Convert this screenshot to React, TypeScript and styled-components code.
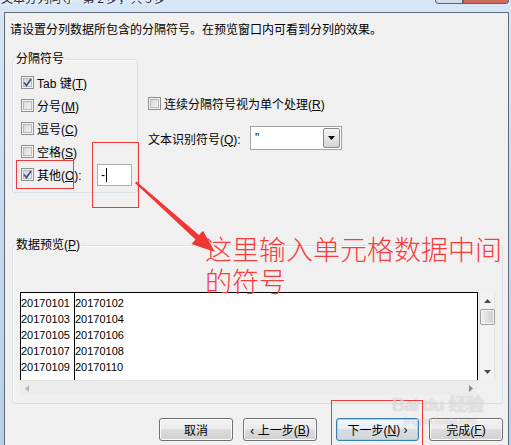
import React from 'react';
import styled, { createGlobalStyle } from 'styled-components';

const Global = createGlobalStyle`
  html, body { margin: 0; padding: 0; background: #b9d1ea; }
  body {
    font-family: "Liberation Sans", "Noto Sans CJK SC", sans-serif;
    font-size: 12px;
    color: #000;
  }
  * { box-sizing: border-box; }
`;

const CJK = `"Liberation Sans", "Noto Sans CJK SC", sans-serif`;

const Window = styled.div`
  position: relative;
  width: 511px;
  height: 445px;
  overflow: hidden;
  background: linear-gradient(180deg, #d6e6f6 0%, #b7cfe9 100%);
  display: flex;
  flex-direction: column;
`;

const TitleBar = styled.div`
  height: 12px;
  flex: none;
  display: flex;
  justify-content: space-between;
  align-items: flex-start;
  overflow: hidden;
`;

const TitleText = styled.div`
  margin-top: -10px;
  margin-left: 1px;
  font-family: "Noto Sans CJK SC", sans-serif;
  font-size: 12px;
  line-height: 16px;
  color: #1c2838;
  text-shadow: 0 0 5px #fff, 0 0 3px #fff;
  white-space: nowrap;
`;

const CaptionButtons = styled.div`
  display: flex;
  margin-right: 2px;
`;

const CaptionButton = styled.div<{ $close?: boolean; $w: number }>`
  width: ${(p) => p.$w}px;
  height: 4px;
  border: 1px solid #56667a;
  border-top: none;
  border-radius: ${(p) => (p.$close ? '0 0 4px 0' : '0 0 0 4px')};
  background: ${(p) => (p.$close ? '#cf6a5a' : '#d3dde8')};
`;

const Frame = styled.div`
  flex: 1;
  display: flex;
  padding: 0 2px 0 4px;
  min-height: 0;
`;

const Content = styled.div`
  flex: 1;
  background: #f0f0f0;
  border: 1px solid #5b6b7c;
  border-bottom: none;
  display: flex;
  flex-direction: column;
`;

const Instruction = styled.div`
  margin: 9px 0 0 5px;
  line-height: 16px;
  font-family: ${CJK};
  white-space: nowrap;
`;

const TopSection = styled.div`
  display: flex;
  align-items: flex-start;
  margin-top: 14px;
`;

const GroupBox = styled.fieldset<{ $w: number; $pt: number; $pb: number }>`
  margin: 0 0 0 7px;
  min-width: 0;
  width: ${(p) => p.$w}px;
  border: 1px solid #d5dfe5;
  border-radius: 3px;
  padding: ${(p) => p.$pt}px 0 ${(p) => p.$pb}px 2px;
  box-shadow: inset 1px 1px 0 #fbfcfd;
`;

const Legend = styled.legend`
  padding: 0 1px;
  margin: 0;
  line-height: 14px;
  font-family: ${CJK};
  font-size: 12px;
`;

const CheckList = styled.div`
  display: flex;
  flex-direction: column;
  padding-left: 6px;
`;

const CheckRow = styled.div<{ $h: number }>`
  height: ${(p) => p.$h}px;
  display: flex;
  align-items: center;
  gap: 3px;
  font-family: ${CJK};
  white-space: nowrap;
`;

const Box = styled.span`
  width: 13px;
  height: 13px;
  flex: none;
  border: 1px solid #8e8f8f;
  background: #f4f4f4;
  display: flex;
  align-items: center;
  justify-content: center;
  box-shadow: inset 0 0 0 1px #f4f4f4, inset 0 0 0 2px #b8b8b8;
  background: linear-gradient(135deg, #cfd0d2 0%, #f3f3f3 80%);
`;

const Check: React.FC<{ checked?: boolean }> = ({ checked }) => (
  <Box>
    {checked && (
      <svg width="9" height="9" viewBox="0 0 9 9">
        <path d="M1 4.5 L3.5 7.5 L8 1" fill="none" stroke="#3a5596" strokeWidth="1.8" />
      </svg>
    )}
  </Box>
);

const OtherLabel = styled.span`
  width: 54px;
`;

const SmallInput = styled.div`
  width: 35px;
  height: 22px;
  background: #fff;
  border: 1px solid #abadb3;
  margin-left: 3px;
  display: flex;
  align-items: center;
  padding-left: 3px;
  font-family: ${CJK};
`;

const Caret = styled.span`
  width: 1px;
  height: 14px;
  background: #000;
  margin-left: 1px;
`;

const RightCol = styled.div`
  margin: 43px 0 0 10px;
  display: flex;
  flex-direction: column;
  gap: 15px;
`;

const FieldRow = styled.div`
  display: flex;
  align-items: center;
  height: 24px;
  font-family: ${CJK};
  white-space: nowrap;
`;

const FieldLabel = styled.span`
  width: 102px;
`;

const Combo = styled.div`
  width: 92px;
  height: 24px;
  border: 1px solid #a3a3a3;
  background: #fff;
  display: flex;
  padding: 1px;
`;

const ComboValue = styled.div`
  flex: 1;
  padding-left: 3px;
  line-height: 20px;
  font-family: "Liberation Sans", sans-serif;
`;

const ComboButton = styled.div`
  width: 17px;
  border: 1px solid #8a8a8a;
  border-radius: 2px;
  background: linear-gradient(180deg, #f4f4f4 0%, #e6e6e6 50%, #d2d2d2 100%);
  display: flex;
  align-items: center;
  justify-content: center;
`;

const PreviewBox = styled(GroupBox)`
  margin-top: 45px;
`;

const PreviewGrid = styled.div`
  margin-left: 5px;
  display: grid;
  grid-template-columns: 458px 16px;
  grid-template-rows: 88px 15px;
  column-gap: 1px;
`;

const DataBox = styled.div`
  background: #fff;
  border: 1px solid #000;
  border-bottom: none;
  display: grid;
  grid-template-columns: 53px 1fr;
`;

const DataCol = styled.div<{ $sep?: boolean }>`
  border-left: ${(p) => (p.$sep ? '1px solid #000' : 'none')};
  padding-top: 2px;
  font-family: "Liberation Sans", sans-serif;
  font-size: 11px;
  line-height: 16px;
`;

const VScroll = styled.div`
  background: #f3f3f3;
  border-left: 1px solid #e9e9e9;
  border-right: 1px solid #e4e4e4;
  display: flex;
  flex-direction: column;
  align-items: center;
`;

const ScrollArrow = styled.div`
  height: 17px;
  width: 100%;
  display: flex;
  align-items: center;
  justify-content: center;
`;

const Thumb = styled.div`
  width: 15px;
  height: 16px;
  border: 1px solid #9c9c9c;
  border-radius: 2px;
  background: linear-gradient(90deg, #eeeeee 0%, #dadada 60%, #cfcfcf 100%);
  box-shadow: inset 0 0 0 1px #f6f6f6;
`;

const Spacer = styled.div`
  flex: 1;
`;

const HScroll = styled.div`
  background: #ececec;
  border-top: 1px solid #e2e2e2;
  display: flex;
  align-items: center;
  justify-content: space-between;
  padding: 0 5px;
`;

const ButtonRow = styled.div`
  display: flex;
  justify-content: flex-end;
  margin-top: 14px;
  padding-right: 5px;
`;

const Button = styled.div<{ $w: number; $ml: number; $focus?: boolean }>`
  width: ${(p) => p.$w}px;
  height: 23px;
  margin-left: ${(p) => p.$ml}px;
  border: 1px solid ${(p) => (p.$focus ? '#3c7fb1' : '#707070')};
  border-radius: 3px;
  background: ${(p) =>
    p.$focus
      ? 'linear-gradient(180deg, #f1f6f9 0%, #e8eef2 45%, #d7dee3 50%, #cfd6db 100%)'
      : 'linear-gradient(180deg, #f2f2f2 0%, #ebebeb 45%, #dddddd 50%, #cfcfcf 100%)'};
  box-shadow: inset 0 0 0 1px ${(p) => (p.$focus ? '#9fd6f2' : '#fbfbfb')};
  display: flex;
  align-items: center;
  justify-content: center;
  font-family: ${CJK};
  white-space: nowrap;
`;

/* ---------- annotation overlay ---------- */

const Overlay = styled.div`
  position: absolute;
  inset: 0;
  pointer-events: none;
`;

const RedBox = styled.div`
  position: absolute;
  border: 1px solid #f03a3a;
`;

const RedNote = styled.div`
  position: absolute;
  left: 205px;
  top: 233px;
  font-family: "Noto Sans CJK SC", sans-serif;
  font-weight: 300;
  font-size: 27px;
  line-height: 32px;
  color: #f53d3d;
  white-space: nowrap;
`;

const Watermark = styled.div`
  position: absolute;
  left: 392px;
  top: 395px;
  display: flex;
  flex-direction: column;
  align-items: flex-start;
  color: rgba(255, 255, 255, 0.55);
  text-shadow: 0 0 1px rgba(120, 120, 120, 0.45);
  font-family: "Liberation Sans", "Noto Sans CJK SC", sans-serif;
`;

const WmTop = styled.div`
  font-size: 18px;
  font-weight: bold;
  line-height: 20px;
  letter-spacing: -0.5px;
`;

const WmSub = styled.div`
  font-size: 9px;
  line-height: 12px;
  margin-left: 12px;
`;

const Tri: React.FC<{ dir: 'up' | 'down' | 'left' | 'right'; color?: string }> = ({ dir, color = '#4a4a4a' }) => {
  const pts = {
    up: '0,4 7,4 3.5,0',
    down: '0,0 7,0 3.5,4',
    left: '4,0 4,7 0,3.5',
    right: '0,0 0,7 4,3.5',
  }[dir];
  const vertical = dir === 'up' || dir === 'down';
  return (
    <svg width={vertical ? 7 : 4} height={vertical ? 4 : 7} viewBox={vertical ? '0 0 7 4' : '0 0 4 7'}>
      <polygon points={pts} fill={color} />
    </svg>
  );
};

const rows: [string, string][] = [
  ['20170101', '20170102'],
  ['20170103', '20170104'],
  ['20170105', '20170106'],
  ['20170107', '20170108'],
  ['20170109', '20170110'],
];

export default function App() {
  return (
    <>
      <Global />
      <Window>
        <TitleBar>
          <TitleText>文本分列向导 - 第 2 步，共 3 步</TitleText>
          <CaptionButtons>
            <CaptionButton $w={28} />
            <CaptionButton $w={46} $close />
          </CaptionButtons>
        </TitleBar>
        <Frame>
          <Content>
            <Instruction>请设置分列数据所包含的分隔符号。在预览窗口内可看到分列的效果。</Instruction>
            <TopSection>
              <GroupBox $w={126} $pt={5} $pb={6}>
                <Legend>分隔符号</Legend>
                <CheckList>
                  <CheckRow $h={23}>
                    <Check checked />
                    <span>Tab 键(<u>T</u>)</span>
                  </CheckRow>
                  <CheckRow $h={23}>
                    <Check />
                    <span>分号(<u>M</u>)</span>
                  </CheckRow>
                  <CheckRow $h={23}>
                    <Check />
                    <span>逗号(<u>C</u>)</span>
                  </CheckRow>
                  <CheckRow $h={23}>
                    <Check />
                    <span>空格(<u>S</u>)</span>
                  </CheckRow>
                  <CheckRow $h={23}>
                    <Check checked />
                    <OtherLabel>其他(<u>O</u>):</OtherLabel>
                    <SmallInput>
                      -<Caret />
                    </SmallInput>
                  </CheckRow>
                </CheckList>
              </GroupBox>
              <RightCol>
                <CheckRow $h={16}>
                  <Check />
                  <span>
                    连续分隔符号视为单个处理(<u>R</u>)
                  </span>
                </CheckRow>
                <FieldRow>
                  <FieldLabel>
                    文本识别符号(<u>Q</u>):
                  </FieldLabel>
                  <Combo>
                    <ComboValue>"</ComboValue>
                    <ComboButton>
                      <Tri dir="down" color="#000" />
                    </ComboButton>
                  </Combo>
                </FieldRow>
              </RightCol>
            </TopSection>
            <PreviewBox $w={491} $pt={40} $pb={8}>
              <Legend>
                数据预览(<u>P</u>)
              </Legend>
              <PreviewGrid>
                <DataBox>
                  <DataCol>
                    {rows.map((r) => (
                      <div key={r[0]}>{r[0]}</div>
                    ))}
                  </DataCol>
                  <DataCol $sep>
                    {rows.map((r) => (
                      <div key={r[1]}>{r[1]}</div>
                    ))}
                  </DataCol>
                </DataBox>
                <VScroll>
                  <ScrollArrow>
                    <Tri dir="up" />
                  </ScrollArrow>
                  <Thumb />
                  <Spacer />
                  <ScrollArrow>
                    <Tri dir="down" />
                  </ScrollArrow>
                </VScroll>
                <HScroll>
                  <Tri dir="left" color="#b4b4b4" />
                  <Tri dir="right" color="#8a8a8a" />
                </HScroll>
              </PreviewGrid>
            </PreviewBox>
            <ButtonRow>
              <Button $w={74} $ml={0}>取消</Button>
              <Button $w={74} $ml={10}>‹ 上一步(<u>B</u>)</Button>
              <Button $w={83} $ml={19} $focus>
                下一步(<u>N</u>) ›
              </Button>
              <Button $w={74} $ml={10}>
                完成(<u>F</u>)
              </Button>
            </ButtonRow>
          </Content>
        </Frame>

        <Overlay>
          <RedBox style={{ left: 16, top: 160, width: 58, height: 29 }} />
          <RedBox style={{ left: 92, top: 142, width: 47, height: 66 }} />
          <RedBox style={{ left: 331, top: 400, width: 92, height: 60 }} />
          <svg width="511" height="445" style={{ position: 'absolute', left: 0, top: 0 }}>
            <polygon
              points="135,183 136.5,181.5 199,235 203,230.7 215,252 191.5,244 195.5,239.5"
              fill="#f23535"
            />
          </svg>
          <RedNote>
            这里输入单元格数据中间
            <br />
            的符号
          </RedNote>
          <Watermark>
            <WmTop>Bai du 经验</WmTop>
            <WmSub>jingyan.baidu.com</WmSub>
          </Watermark>
        </Overlay>
      </Window>
    </>
  );
}
